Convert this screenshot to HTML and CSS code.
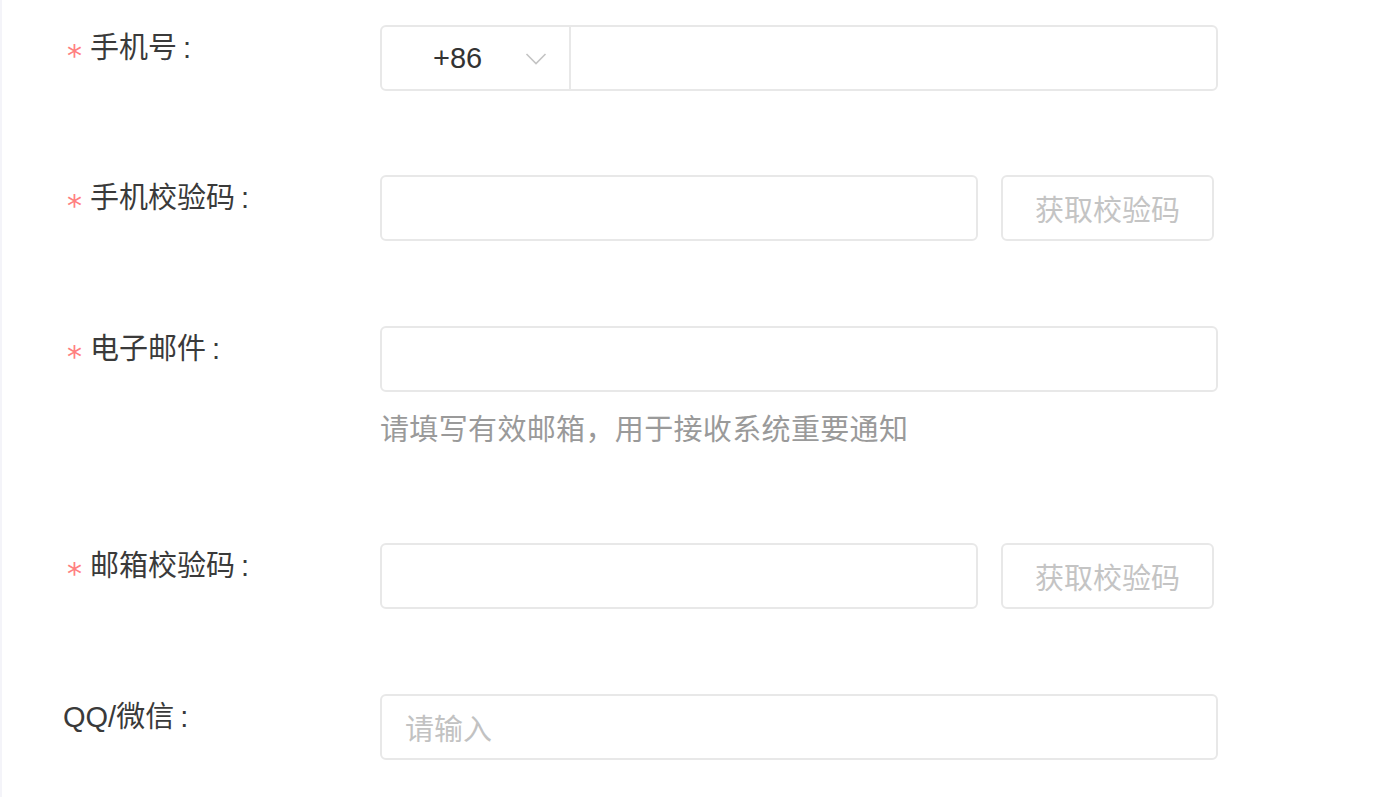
FILE: index.html
```html
<!DOCTYPE html>
<html lang="zh-CN">
<head>
<meta charset="utf-8">
<title>表单</title>
<link rel="stylesheet" href="styles.css">
</head>
<body>
<div class="page">
  <form class="form">
    <div class="row">
      <label class="label"><span class="req">*</span><span class="ltext">手机号</span></label>
      <div class="control">
        <div class="phone">
          <div class="code">
            <span class="code-text">+86</span>
            <svg class="chev" width="22" height="14" viewBox="0 0 22 14"><path d="M1.5 2 L11 11.5 L20.5 2" fill="none" stroke="#c4c4c4" stroke-width="1.6"/></svg>
          </div>
          <div class="phone-input"></div>
        </div>
      </div>
    </div>

    <div class="row">
      <label class="label"><span class="req">*</span><span class="ltext">手机校验码</span></label>
      <div class="control split">
        <div class="input short"></div>
        <button type="button" class="btn" disabled>获取校验码</button>
      </div>
    </div>

    <div class="row row-extra">
      <label class="label"><span class="req">*</span><span class="ltext">电子邮件</span></label>
      <div class="control">
        <div class="input"></div>
        <div class="extra">请填写有效邮箱，用于接收系统重要通知</div>
      </div>
    </div>

    <div class="row">
      <label class="label"><span class="req">*</span><span class="ltext">邮箱校验码</span></label>
      <div class="control split">
        <div class="input short"></div>
        <button type="button" class="btn" disabled>获取校验码</button>
      </div>
    </div>

    <div class="row">
      <label class="label"><span class="ltext">QQ/微信</span></label>
      <div class="control">
        <div class="input"><span class="ph">请输入</span></div>
      </div>
    </div>
  </form>
</div>
</body>
</html>
```

FILE: styles.css
```css
html, body {
  margin: 0;
  padding: 0;
  background: #ffffff;
}

body {
  font-family: "Liberation Sans", "Noto Sans CJK SC", sans-serif;
  font-size: 29px;
  color: #333333;
}

.page {
  height: 797px;
  border-left: 2px solid #f4f4f9;
  box-sizing: border-box;
  overflow: hidden;
}

.form {
  padding-top: 25px;
}

.row {
  display: grid;
  grid-template-columns: 378px 838px;
  margin-bottom: 85px;
}

.row:first-child {
  margin-bottom: 84px;
}

.row:last-child {
  margin-bottom: 0;
}

.row-extra {
  margin-bottom: 91px;
}

.label {
  display: flex;
  align-items: flex-start;
  padding-left: 61px;
  height: 47px;
  color: #3a3a3a;
  white-space: nowrap;
}

.ltext {
  display: block;
  line-height: 47px;
}

.ltext::after {
  content: ":";
  margin-left: 6px;
}

.req {
  display: block;
  font-family: "DejaVu Sans", sans-serif;
  color: #ff8080;
  font-size: 30px;
  line-height: 61px;
  margin-left: 4px;
  margin-right: 8px;
}

.control {
  min-width: 0;
}

.split {
  display: flex;
  gap: 23px;
}

.input {
  height: 66px;
  box-sizing: border-box;
  border: 2px solid #e8e8e8;
  border-radius: 6px;
  background: #fff;
  display: flex;
  align-items: center;
  padding-left: 23px;
}

.short {
  width: 598px;
  flex: none;
}

.ph {
  color: #c2c2c2;
}

.btn {
  width: 213px;
  height: 66px;
  box-sizing: border-box;
  border: 2px solid #e8e8e8;
  border-radius: 6px;
  background: #fff;
  color: #c4c4c4;
  font-family: inherit;
  font-size: 29px;
  padding: 0;
  cursor: not-allowed;
}

.phone {
  display: flex;
  height: 66px;
  box-sizing: border-box;
  border: 2px solid #e8e8e8;
  border-radius: 6px;
  background: #fff;
}

.code {
  width: 189px;
  flex: none;
  box-sizing: border-box;
  border-right: 2px solid #e8e8e8;
  display: flex;
  align-items: center;
  padding-left: 51px;
}

.code-text {
  color: #333;
  width: 92px;
}

.chev {
  display: block;
  margin-top: 2px;
}

.phone-input {
  flex: 1;
}

.extra {
  margin-top: 16px;
  line-height: 44px;
  color: #9a9a9a;
  white-space: nowrap;
  letter-spacing: 0.35px;
}
```
